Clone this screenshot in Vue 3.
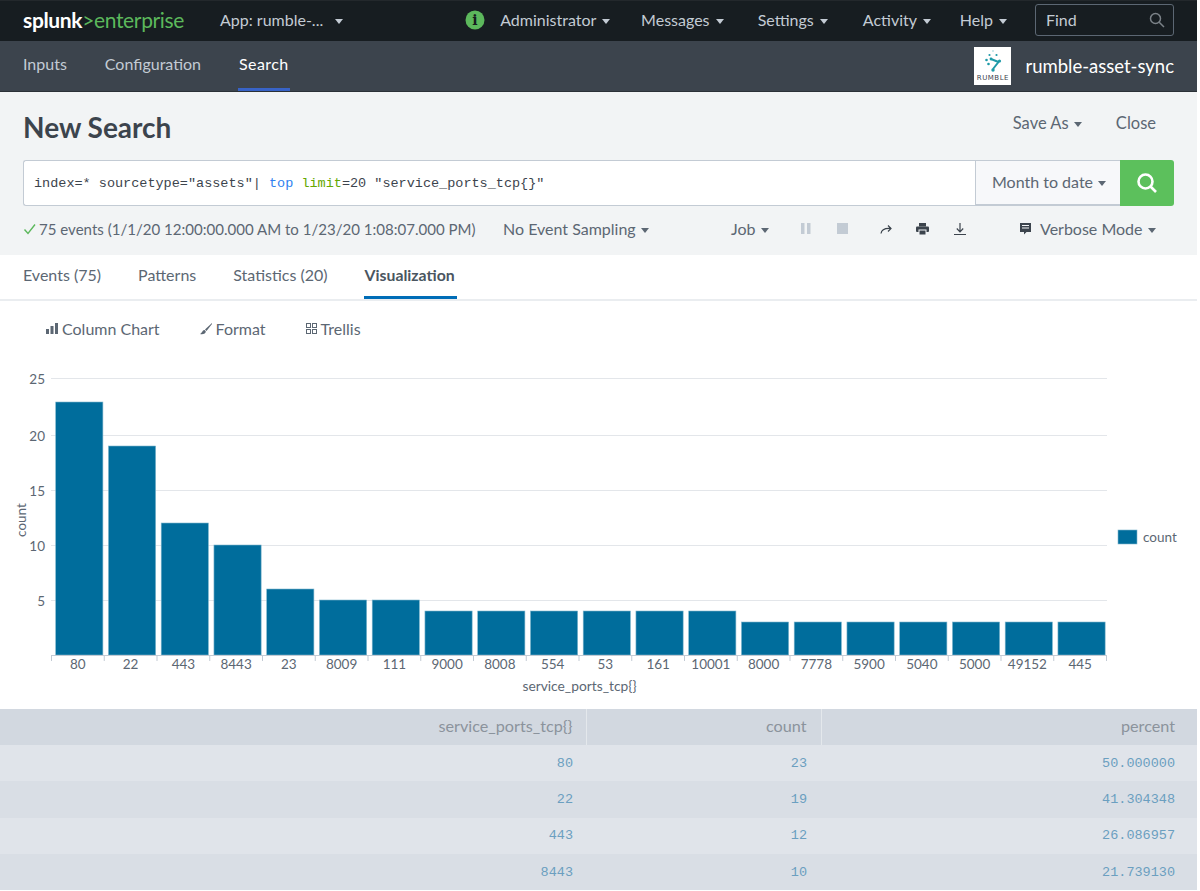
<script setup>
const nav = ['Administrator', 'Messages', 'Settings', 'Activity', 'Help']
const data = [['80',23],['22',19],['443',12],['8443',10],['23',6],['8009',5],['111',5],['9000',4],['8008',4],['554',4],['53',4],['161',4],['10001',4],['8000',3],['7778',3],['5900',3],['5040',3],['5000',3],['49152',3],['445',3]]
const step = 52.75
const x0 = 51.5
const y0 = 655
const unit = 11
const bars = data.map(([label, v], i) => ({
  label,
  x: x0 + i * step + 4.2,
  y: y0 - v * unit,
  h: v * unit,
  cx: x0 + i * step + step / 2,
  tx: x0 + i * step
}))
const grid = [[5, 600.5], [10, 545.5], [15, 490.5], [20, 435.5], [25, 378.5]].map(([v, y]) => ({ v, y }))
const rows = [['80','23','50.000000'],['22','19','41.304348'],['443','12','26.086957'],['8443','10','21.739130']]
</script>

<template>
  <div class="page">
    <header class="topbar">
      <div class="logo"><span class="logo-a">splunk</span><span class="logo-b">&gt;enterprise</span></div>
      <div class="app-menu">App: rumble-... <i class="caret caret-wide"></i></div>
      <div class="top-right">
        <svg class="info" width="20" height="20" viewBox="0 0 20 20"><circle cx="10" cy="10" r="9.5" fill="#5cb85c"/><text x="10" y="14.5" text-anchor="middle" class="info-i">i</text></svg>
        <div v-for="n in nav" :key="n" class="nav-item">{{ n }} <i class="caret"></i></div>
        <div class="find">
          <span>Find</span>
          <svg width="16" height="16" viewBox="0 0 16 16" fill="none" stroke="#7b8288" stroke-width="1.5"><circle cx="6.5" cy="6.5" r="5"/><path d="M10.2 10.2 15 15"/></svg>
        </div>
      </div>
    </header>

    <nav class="appbar">
      <a class="tab">Inputs</a>
      <a class="tab">Configuration</a>
      <a class="tab active">Search</a>
      <div class="brand">
        <div class="brand-logo">
          <svg width="30" height="25" viewBox="0 0 30 25" fill="#1e9aa8">
            <circle cx="15" cy="2" r=".7" opacity=".6"/>
            <circle cx="11.5" cy="6" r="1.1"/><circle cx="18.5" cy="6" r="1.1"/>
            <circle cx="8.5" cy="11" r="1.3"/><circle cx="13" cy="10" r="1.4"/><circle cx="21.5" cy="12" r="1.6"/>
            <circle cx="10.5" cy="15" r="1.3"/><circle cx="15" cy="21" r="1.7"/>
            <path d="M13 10 20.5 13 15 20" fill="none" stroke="#1e9aa8" stroke-width="2"/>
          </svg>
          <span>RUMBLE</span>
        </div>
        <span class="brand-name">rumble-asset-sync</span>
      </div>
    </nav>

    <section class="search-head">
      <div class="title-row">
        <h1>New Search</h1>
        <div class="title-actions">
          <span>Save As <i class="caret dark"></i></span>
          <span>Close</span>
        </div>
      </div>
      <div class="search-row">
        <div class="query">index=* sourcetype="assets"| <b class="kw-blue">top</b> <b class="kw-green">limit</b>=20 "service_ports_tcp{}"</div>
        <div class="range">Month to date <i class="caret dark"></i></div>
        <button class="go">
          <svg width="22" height="22" viewBox="0 0 22 22" fill="none" stroke="#fff" stroke-width="2.6"><circle cx="9.5" cy="9.5" r="7"/><path d="M14.5 14.5 20 20"/></svg>
        </button>
      </div>
      <div class="status-row">
        <div class="status">
          <svg width="13" height="12" viewBox="0 0 13 12" fill="none" stroke="#5cb85c" stroke-width="1.4"><path d="M1.5 6.5 5 10.5 12 1.5"/></svg>
          <span>75 events (1/1/20 12:00:00.000 AM to 1/23/20 1:08:07.000 PM)</span>
        </div>
        <div class="sampling">No Event Sampling <i class="caret dark"></i></div>
        <div class="job">Job <i class="caret dark"></i></div>
        <div class="job-icons">
          <svg class="i-pause" width="10" height="11" viewBox="0 0 10 11" fill="#c3cbd4"><rect width="3.5" height="11"/><rect x="6" width="3.5" height="11"/></svg>
          <svg class="i-stop" width="11" height="11" viewBox="0 0 11 11" fill="#c3cbd4"><rect width="11" height="11"/></svg>
          <svg class="i-share" width="12" height="10" viewBox="0 0 12 10" fill="none" stroke="#3c444d" stroke-width="1.2"><path d="M1 9.5C1.5 5.5 5 4 11 4.5M8 1.5 11 4.5 8 7.5"/></svg>
          <svg class="i-print" width="13" height="12" viewBox="0 0 13 12" fill="#3c444d"><rect x="3" width="7" height="3.5"/><rect y="3.5" width="13" height="5.5" rx="1"/><rect x="3" y="7" width="7" height="5" stroke="#f2f4f7"/></svg>
          <svg class="i-down" width="12" height="12" viewBox="0 0 12 12" fill="none" stroke="#3c444d" stroke-width="1.2"><path d="M6 0v8.5M2.8 5.5 6 8.8l3.2-3.3M0 11.5h12"/></svg>
        </div>
        <div class="mode">
          <svg width="12" height="12" viewBox="0 0 12 12" fill="#3c444d"><path d="M0 0h11v9H6.5L4 11.5V9H0z"/><path d="M2 2.5h7M2 5h7" stroke="#f2f4f7"/></svg>
          <span>Verbose Mode <i class="caret dark"></i></span>
        </div>
      </div>
    </section>

    <div class="tabs">
      <a>Events (75)</a><a>Patterns</a><a>Statistics (20)</a><a class="on">Visualization</a>
    </div>

    <div class="viz-bar">
      <span class="viz-item">
        <svg width="12" height="11" viewBox="0 0 12 11" fill="#5c6773"><rect y="6" width="3" height="5"/><rect x="4.5" y="3" width="3" height="8"/><rect x="9" width="3" height="11"/></svg>
        Column Chart
      </span>
      <span class="viz-item">
        <svg width="12" height="12" viewBox="0 0 12 12" fill="#5c6773"><path d="M12 0 5 6.5 6.5 8 12 1zM4.5 7C2.5 7 2.5 9.5 0 11c3 .8 6-.5 5.8-2.8z"/></svg>
        Format
      </span>
      <span class="viz-item">
        <svg width="11" height="11" viewBox="0 0 11 11" fill="none" stroke="#5c6773"><rect x=".5" y=".5" width="4" height="4"/><rect x="6.5" y=".5" width="4" height="4"/><rect x=".5" y="6.5" width="4" height="4"/><rect x="6.5" y="6.5" width="4" height="4"/></svg>
        Trellis
      </span>
    </div>

    <svg class="chart" width="1197" height="359" viewBox="0 350 1197 359">
      <g v-for="g in grid" :key="g.v">
        <line x1="51" x2="1107" :y1="g.y" :y2="g.y" stroke="#e3e6ea" stroke-width="1"/>
        <text x="45" :y="g.y + 5" text-anchor="end" class="ct">{{ g.v }}</text>
      </g>
      <text transform="translate(26 520) rotate(-90)" text-anchor="middle" class="ct">count</text>
      <rect v-for="b in bars" :key="b.label" :x="b.x" :y="b.y" width="47.2" :height="b.h" fill="#006d9c" stroke="#7fb6cd" stroke-width=".6"/>
      <line x1="51.5" x2="1106.5" y1="655.5" y2="655.5" stroke="#c3cbd4"/>
      <line v-for="b in bars" :key="'t' + b.label" :x1="b.tx" :x2="b.tx" y1="655" y2="661" stroke="#c3cbd4"/>
      <line x1="1106.5" x2="1106.5" y1="655" y2="661" stroke="#c3cbd4"/>
      <text v-for="b in bars" :key="'l' + b.label" :x="b.cx" y="669" text-anchor="middle" class="ct">{{ b.label }}</text>
      <text x="579.5" y="691" text-anchor="middle" class="ct ct-title">service_ports_tcp{}</text>
      <rect x="1118" y="530" width="19" height="14" fill="#006d9c" stroke="#7fb6cd" stroke-width=".6"/>
      <text x="1143" y="542" class="ct">count</text>
    </svg>

    <table class="results">
      <thead>
        <tr><th class="c1">service_ports_tcp{}</th><th class="c2">count</th><th>percent</th></tr>
      </thead>
      <tbody>
        <tr v-for="r in rows" :key="r[0]">
          <td v-for="c in r" :key="c">{{ c }}</td>
        </tr>
      </tbody>
    </table>
  </div>
</template>

<style scoped>
.page { width: 1197px; height: 891px; overflow: hidden; background: #fff; font-family: "Lato", "Open Sans", sans-serif; color: #5c6773; }
.caret { display: inline-block; width: 0; height: 0; border-left: 4.5px solid transparent; border-right: 4.5px solid transparent; border-top: 5.5px solid #c3cbd4; vertical-align: 2px; margin-left: 2px; }
.caret.dark { border-top-color: #5c6773; margin-left: 1px; }
.caret-wide { margin-left: 8px; }
.topbar { height: 41px; box-sizing: border-box; background: #171d21; border-top: 1px solid #23282c; padding: 0 0 3px 23px; display: flex; align-items: center; color: #c3cbd4; font-size: 16px; }
.logo { font-size: 21px; width: 197px; letter-spacing: -.35px; white-space: nowrap; }
.logo-a { color: #fff; font-weight: 700; }
.logo-b { color: #5cb85c; }
.top-right { margin-left: auto; display: flex; align-items: center; margin-right: 23px; }
.info { margin-right: 15px; }
.info-i { fill: #171d21; font-size: 14px; font-weight: 700; font-family: "DejaVu Serif", serif; }
.nav-item { margin-right: 32px; white-space: nowrap; }
.nav-item:nth-child(2) { margin-right: 31px; }
.nav-item:nth-child(3) { margin-right: 34px; }
.nav-item:nth-child(4) { margin-right: 35px; }
.nav-item:nth-child(5) { margin-right: 29px; }
.nav-item:nth-child(6) { margin-right: 31px; }
.find { width: 139px; height: 32px; box-sizing: border-box; border: 1px solid #5c6773; border-radius: 3px; display: flex; justify-content: space-between; align-items: center; padding: 0 8px 0 10px; margin-left: -3px; }
.appbar { height: 50px; background: #3c444d; display: flex; align-items: stretch; padding-left: 23px; color: #c3cbd4; font-size: 16px; border-bottom: 1px solid #2b3137; }
.tab { margin-right: 38px; line-height: 46px; position: relative; }
.tab.active { color: #fff; letter-spacing: .4px; }
.tab.active::after { content: ""; position: absolute; left: -1px; right: -1px; bottom: 0; height: 3px; background: #3863c7; }
.brand { margin-left: auto; display: flex; align-items: center; margin-right: 23px; }
.brand-logo { width: 37px; height: 38px; background: #fff; margin-right: 14px; display: flex; flex-direction: column; align-items: center; color: #3c444d; font-size: 7px; letter-spacing: .5px; line-height: 9px; font-family: "DejaVu Sans", sans-serif; padding-top: 2px; box-sizing: border-box; }
.brand-name { color: #fff; font-size: 18.5px; }
.search-head { background: #f2f4f5; height: 163px; padding: 0 23px; box-sizing: border-box; }
.title-row { display: flex; justify-content: space-between; height: 68px; align-items: center; }
h1 { font-size: 28px; font-weight: 700; color: #3c444d; margin: 1px 0 0; }
.title-actions { display: flex; gap: 34px; font-size: 16.5px; margin-right: 18px; margin-top: -6px; }
.search-row { display: flex; height: 46px; box-sizing: border-box; width: 1151px; }
.query { flex: 1; background: #fff; border: 1px solid #c3cbd4; border-right: 0; border-radius: 3px 0 0 3px; font-family: "Liberation Mono", monospace; font-size: 13.5px; line-height: 46px; padding-left: 10px; color: #3c444d; white-space: nowrap; }
.kw-blue { color: #2f7ff0; font-weight: 400; }
.kw-green { color: #65a800; font-weight: 400; }
.range { width: 145px; background: #f7f8fa; border: 1px solid #c3cbd4; border-right: 0; border-bottom-width: 2px; font-size: 16px; line-height: 41px; padding-left: 16px; box-sizing: border-box; white-space: nowrap; }
.go { width: 54px; border: 0; background: #5cc05c; border-radius: 0 3px 3px 0; display: flex; align-items: center; justify-content: center; padding: 0; }
.status-row { display: flex; align-items: center; height: 45px; font-size: 16px; white-space: nowrap; }
.status { display: flex; align-items: center; gap: 3px; width: 480px; font-size: 15.05px; }
.sampling { width: 228px; }
.job { width: 70px; }
.job-icons { display: flex; align-items: center; width: 219px; }
.i-stop { margin-left: 26px; }
.i-share { margin-left: 32px; }
.i-print { margin-left: 24px; }
.i-down { margin-left: 25px; }
.mode { display: flex; align-items: center; gap: 8px; }
.tabs { height: 46px; box-sizing: border-box; border-bottom: 2px solid #eaedf0; padding-left: 23px; display: flex; gap: 37px; font-size: 16px; line-height: 40px; background: #fff; }
.tabs a { height: 44px; }
.tabs a.on { font-weight: 700; font-size: 15.8px; color: #4a5560; border-bottom: 3px solid #006db7; box-sizing: border-box; margin-left: -1px; padding: 0 2px 0 1px; }
.viz-bar { height: 49px; box-sizing: border-box; padding: 6px 0 0 46px; display: flex; align-items: center; gap: 40px; font-size: 16px; }
.viz-item { display: inline-flex; align-items: center; gap: 4px; }
.chart { display: block; }
.ct { font-family: "Lato", "Open Sans", sans-serif; font-size: 13.5px; fill: #5c6773; }
.ct-title { font-size: 13.8px; }
.results { width: 1197px; border-collapse: collapse; table-layout: fixed; }
th { height: 36px; box-sizing: border-box; padding: 0 22px 3px 0; background: #d2d8e0; color: #8b939c; font-weight: 400; font-size: 16.2px; text-align: right; border-right: 1px solid #e4e8ec; }
th:last-child { border-right: 0; }
.c1 { width: 586px; padding-right: 13px; }
.c2 { width: 235px; padding-right: 14px; }
td { height: 36.3px; padding: 0 22px 0 0; text-align: right; font-family: "Liberation Mono", monospace; font-size: 13.5px; color: #6b9fc0; }
td:nth-child(1) { padding-right: 13px; }
td:nth-child(2) { padding-right: 14px; }
tr:nth-child(odd) td { background: #e0e4ea; }
tr:nth-child(even) td { background: #d9dee5; }
</style>
